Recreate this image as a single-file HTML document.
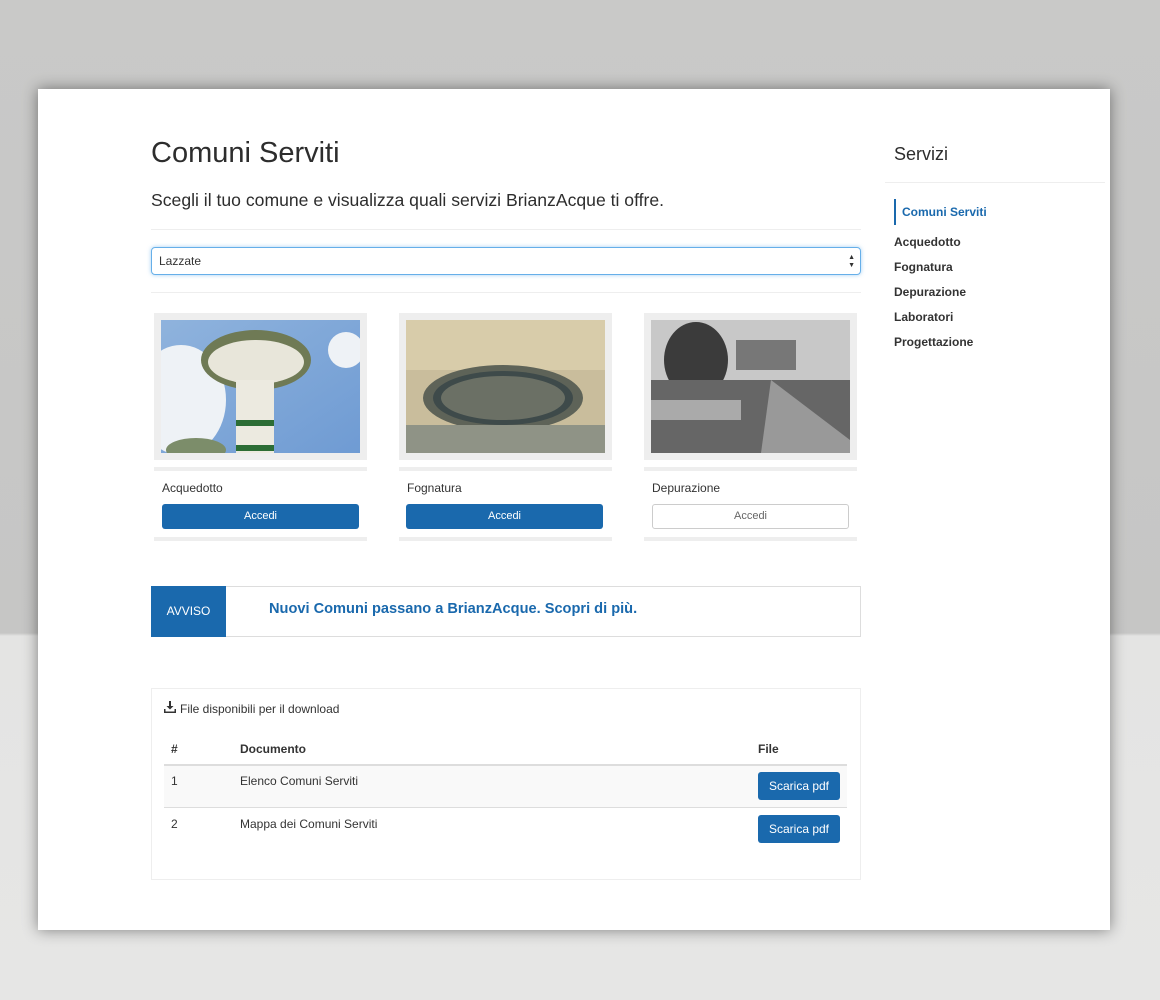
<!DOCTYPE html>
<html><head><meta charset="utf-8"><style>
*{margin:0;padding:0;box-sizing:border-box}
body{width:1160px;height:1000px;position:relative;overflow:hidden;font-family:"Liberation Sans",Arial,sans-serif;color:#333;background:linear-gradient(#c9c9c8 0,#c6c6c5 633px,#e4e4e3 636px,#e6e6e5 1000px)}
.a{position:absolute}
#card{left:38px;top:89px;width:1072px;height:841px;background:#fff;box-shadow:0 0 14px rgba(0,0,0,.45)}
.hr{height:1px;background:#eee}
.frame{background:#eee;width:213px;height:147px;padding:7px}
.bar{height:4px;background:#eee;width:213px}
.btn{background:#1a69ad;color:#fff;font-size:11px;text-align:center;border-radius:3px;line-height:25px;height:25px;width:197px}
.nav{font-size:12px;font-weight:bold;color:#333}
</style></head><body>
<div class="a" id="card"></div>
<div class="a" style="left:151px;top:137px;font-size:29px;color:#2d2d2d">Comuni Serviti</div>
<div class="a" style="left:151px;top:190px;font-size:17.6px;color:#2d2d2d">Scegli il tuo comune e visualizza quali servizi BrianzAcque ti offre.</div>
<div class="a hr" style="left:151px;top:229px;width:710px"></div>
<div class="a" style="left:151px;top:247px;width:710px;height:28px;border:1px solid #66afe9;border-radius:4px;box-shadow:0 0 4px rgba(102,175,233,.6);font-size:12px;line-height:26px;padding-left:7px;color:#333">Lazzate<span class="a" style="right:5px;top:0;font-size:7px;line-height:8px;padding-top:6px">▲<br>▼</span></div>
<div class="a hr" style="left:151px;top:292px;width:710px"></div>

<div class="a frame" style="left:154px;top:313px"><svg width="199" height="133"><defs><linearGradient id="s" x1="0" y1="0" x2="1" y2="1"><stop offset="0" stop-color="#8fb3dd"/><stop offset="1" stop-color="#6f9bd3"/></linearGradient></defs><rect width="199" height="133" fill="url(#s)"/><ellipse cx="20" cy="80" rx="45" ry="55" fill="#eef2f6"/><ellipse cx="185" cy="30" rx="18" ry="18" fill="#eef2f6"/><ellipse cx="95" cy="40" rx="55" ry="30" fill="#6f7a55"/><ellipse cx="95" cy="42" rx="48" ry="22" fill="#e8e6da"/><path d="M75 60h38v73H75z" fill="#eceae0"/><rect x="75" y="100" width="38" height="6" fill="#2c6d35"/><rect x="75" y="125" width="38" height="6" fill="#2c6d35"/><ellipse cx="35" cy="130" rx="30" ry="12" fill="#7c8d6a"/></svg></div>
<div class="a frame" style="left:399px;top:313px"><svg width="199" height="133"><rect width="199" height="133" fill="#c9bd9c"/><rect width="199" height="50" fill="#d8ccaa"/><ellipse cx="97" cy="78" rx="80" ry="33" fill="#5e6358"/><ellipse cx="97" cy="78" rx="70" ry="27" fill="#3e4a4a"/><ellipse cx="97" cy="78" rx="62" ry="22" fill="#8a8a78" opacity=".6"/><rect y="105" width="199" height="28" fill="#8f9386"/></svg></div>
<div class="a frame" style="left:644px;top:313px"><svg width="199" height="133"><rect width="199" height="133" fill="#c8c8c8"/><ellipse cx="45" cy="40" rx="32" ry="38" fill="#3b3b3b"/><rect x="85" y="20" width="60" height="30" fill="#777"/><rect y="60" width="199" height="73" fill="#666"/><path d="M120 60L199 120V133H110z" fill="#999"/><path d="M0 80h90v20H0z" fill="#aaa"/></svg></div>
<div class="a bar" style="left:154px;top:467px"></div>
<div class="a bar" style="left:399px;top:467px"></div>
<div class="a bar" style="left:644px;top:467px"></div>
<div class="a" style="left:162px;top:481px;font-size:12px">Acquedotto</div>
<div class="a" style="left:407px;top:481px;font-size:12px">Fognatura</div>
<div class="a" style="left:652px;top:481px;font-size:12px">Depurazione</div>
<div class="a btn" style="left:162px;top:504px">Accedi</div>
<div class="a btn" style="left:406px;top:504px">Accedi</div>
<div class="a btn" style="left:652px;top:504px;background:#fff;color:#666;border:1px solid #ccc;line-height:23px">Accedi</div>
<div class="a bar" style="left:154px;top:537px"></div>
<div class="a bar" style="left:399px;top:537px"></div>
<div class="a bar" style="left:644px;top:537px"></div>

<div class="a" style="left:151px;top:586px;width:710px;height:51px;border:1px solid #ddd"></div>
<div class="a" style="left:151px;top:586px;width:75px;height:51px;background:#1a69ad;color:#fff;font-size:12px;line-height:51px;text-align:center">AVVISO</div>
<div class="a" style="left:269px;top:601px;font-size:14.6px;font-weight:bold;color:#1a69ad">Nuovi Comuni passano a BrianzAcque. Scopri di più.</div>

<div class="a" style="left:151px;top:688px;width:710px;height:192px;border:1px solid #eee"></div>
<svg class="a" style="left:164px;top:701px" width="12" height="12" viewBox="0 0 12 12"><path d="M5 0h2v5h2.5L6 8.5 2.5 5H5z" fill="#333"/><path d="M0 8h1.5v2.5h9V8H12v4H0z" fill="#333"/></svg>
<div class="a" style="left:180px;top:702px;font-size:12px">File disponibili per il download</div>
<div class="a" style="left:171px;top:742px;font-size:12px;font-weight:bold">#</div>
<div class="a" style="left:240px;top:742px;font-size:12px;font-weight:bold">Documento</div>
<div class="a" style="left:758px;top:742px;font-size:12px;font-weight:bold">File</div>
<div class="a" style="left:164px;top:764px;width:683px;height:2px;background:#ddd"></div>
<div class="a" style="left:164px;top:766px;width:683px;height:41px;background:#f9f9f9"></div>
<div class="a" style="left:164px;top:807px;width:683px;height:1px;background:#ddd"></div>
<div class="a" style="left:171px;top:774px;font-size:12px">1</div>
<div class="a" style="left:240px;top:774px;font-size:12px">Elenco Comuni Serviti</div>
<div class="a" style="left:171px;top:817px;font-size:12px">2</div>
<div class="a" style="left:240px;top:817px;font-size:12px">Mappa dei Comuni Serviti</div>
<div class="a btn" style="left:758px;top:772px;width:82px;height:28px;line-height:28px;font-size:12px">Scarica pdf</div>
<div class="a btn" style="left:758px;top:815px;width:82px;height:28px;line-height:28px;font-size:12px">Scarica pdf</div>

<div class="a" style="left:894px;top:144px;font-size:18px;color:#2d2d2d">Servizi</div>
<div class="a hr" style="left:885px;top:182px;width:220px"></div>
<div class="a" style="left:894px;top:199px;width:2px;height:26px;background:#1a69ad"></div>
<div class="a nav" style="left:902px;top:205px;color:#1a69ad">Comuni Serviti</div>
<div class="a nav" style="left:894px;top:235px">Acquedotto</div>
<div class="a nav" style="left:894px;top:260px">Fognatura</div>
<div class="a nav" style="left:894px;top:285px">Depurazione</div>
<div class="a nav" style="left:894px;top:310px">Laboratori</div>
<div class="a nav" style="left:894px;top:335px">Progettazione</div>
</body></html>
